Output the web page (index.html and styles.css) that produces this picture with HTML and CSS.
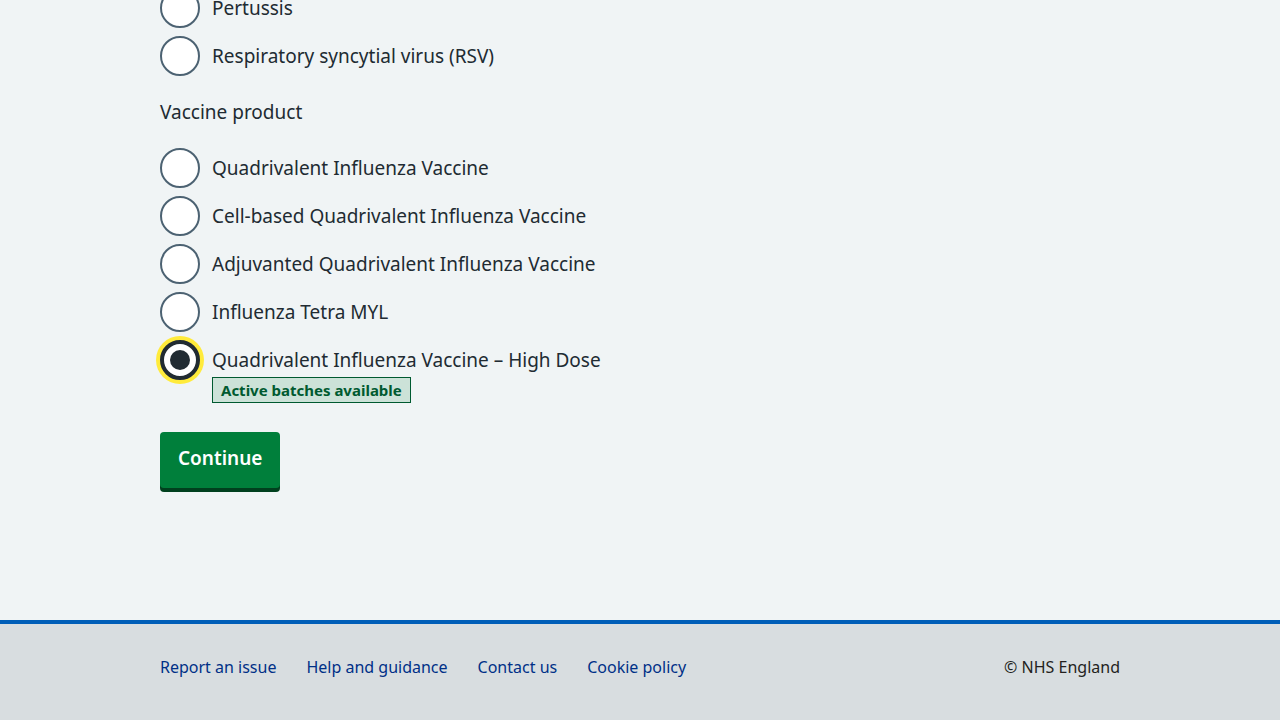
FILE: index.html
```html
<!DOCTYPE html>
<html lang="en">
<head>
<meta charset="utf-8">
<title>Vaccine product</title>
<link rel="stylesheet" href="styles.css">
</head>
<body>
<main class="page">
  <div class="container">
    <form class="form">
      <fieldset class="fieldset fieldset-first">
        <div class="radios">
          <div class="radio-item">
            <span class="radio"></span>
            <label class="radio-label">Pertussis</label>
          </div>
          <div class="radio-item">
            <span class="radio"></span>
            <label class="radio-label">Respiratory syncytial virus (RSV)</label>
          </div>
        </div>
      </fieldset>
      <fieldset class="fieldset">
        <legend class="legend">Vaccine product</legend>
        <div class="radios">
          <div class="radio-item">
            <span class="radio"></span>
            <label class="radio-label">Quadrivalent Influenza Vaccine</label>
          </div>
          <div class="radio-item">
            <span class="radio"></span>
            <label class="radio-label">Cell-based Quadrivalent Influenza Vaccine</label>
          </div>
          <div class="radio-item">
            <span class="radio"></span>
            <label class="radio-label">Adjuvanted Quadrivalent Influenza Vaccine</label>
          </div>
          <div class="radio-item">
            <span class="radio"></span>
            <label class="radio-label">Influenza Tetra MYL</label>
          </div>
          <div class="radio-item">
            <span class="radio radio-checked"></span>
            <div class="radio-label">
              <label>Quadrivalent Influenza Vaccine – High Dose</label>
              <div class="tag-row"><strong class="tag">Active batches available</strong></div>
            </div>
          </div>
        </div>
      </fieldset>
      <button type="button" class="button">Continue</button>
    </form>
  </div>
</main>
<footer class="footer">
  <div class="footer-inner">
    <ul class="footer-list">
      <li><a href="#" class="footer-link">Report an issue</a></li>
      <li><a href="#" class="footer-link">Help and guidance</a></li>
      <li><a href="#" class="footer-link">Contact us</a></li>
      <li><a href="#" class="footer-link">Cookie policy</a></li>
    </ul>
    <p class="copyright">© NHS England</p>
  </div>
</footer>
</body>
</html>
```

FILE: styles.css
```css
* { box-sizing: border-box; }
html, body { margin: 0; padding: 0; }
body {
  background: #f0f4f5;
  color: #212b32;
  font-family: "Noto Sans", "Liberation Sans", Arial, sans-serif;
  min-height: 100vh;
  display: flex;
  flex-direction: column;
  overflow: hidden;
}
.page { flex: 1; }
.container {
  width: 960px;
  margin: 0 auto;
}
.form { margin-top: -12px; }
.fieldset {
  border: 0;
  margin: 0;
  padding: 0;
  min-width: 0;
}
.fieldset-first { margin-bottom: 22px; }
.legend {
  padding: 0;
  font-size: 19px;
  line-height: 28px;
  margin-bottom: 22px;
}
.radios {
  display: flex;
  flex-direction: column;
  gap: 8px;
}
.radio-item {
  display: flex;
  align-items: flex-start;
}
.radio {
  flex: 0 0 40px;
  width: 40px;
  height: 40px;
  border: 2px solid #4c6272;
  border-radius: 50%;
  background: #fff;
  position: relative;
}
.radio-checked {
  border: 4px solid #212b32;
  box-shadow: 0 0 0 4px #ffeb3b;
}
.radio-checked::after {
  content: "";
  position: absolute;
  left: 6px;
  top: 6px;
  width: 20px;
  height: 20px;
  border-radius: 50%;
  background: #212b32;
}
.radio-label {
  padding: 6px 0 0 12px;
  font-size: 19px;
  line-height: 28px;
}
.tag-row { margin-top: 3px; line-height: 0; }
.tag {
  display: inline-block;
  background: #cce2d8;
  color: #005a30;
  border: 1px solid #005a30;
  font-size: 15px;
  font-weight: 700;
  line-height: 16px;
  padding: 4px 8px;
}
.button {
  margin-top: 29px;
  display: inline-block;
  background: #007f3b;
  color: #fff;
  border: 2px solid transparent;
  border-radius: 4px;
  box-shadow: 0 4px 0 #00401e;
  font-family: inherit;
  font-size: 19px;
  font-weight: 600;
  line-height: 28px;
  padding: 10px 16px 14px;
  cursor: pointer;
}
.footer {
  height: 100px;
  background: #d8dde0;
  border-top: 4px solid #005eb8;
}
.footer-inner {
  width: 960px;
  margin: 0 auto;
  display: flex;
  justify-content: space-between;
  align-items: flex-start;
  padding-top: 31px;
}
.footer-list {
  list-style: none;
  margin: 0;
  padding: 0;
  display: flex;
  gap: 30px;
}
.footer-link {
  color: #003087;
  text-decoration: none;
  font-size: 16px;
  line-height: 24px;
}
.copyright {
  margin: 0;
  color: #231f20;
  font-size: 16px;
  line-height: 24px;
}
```
